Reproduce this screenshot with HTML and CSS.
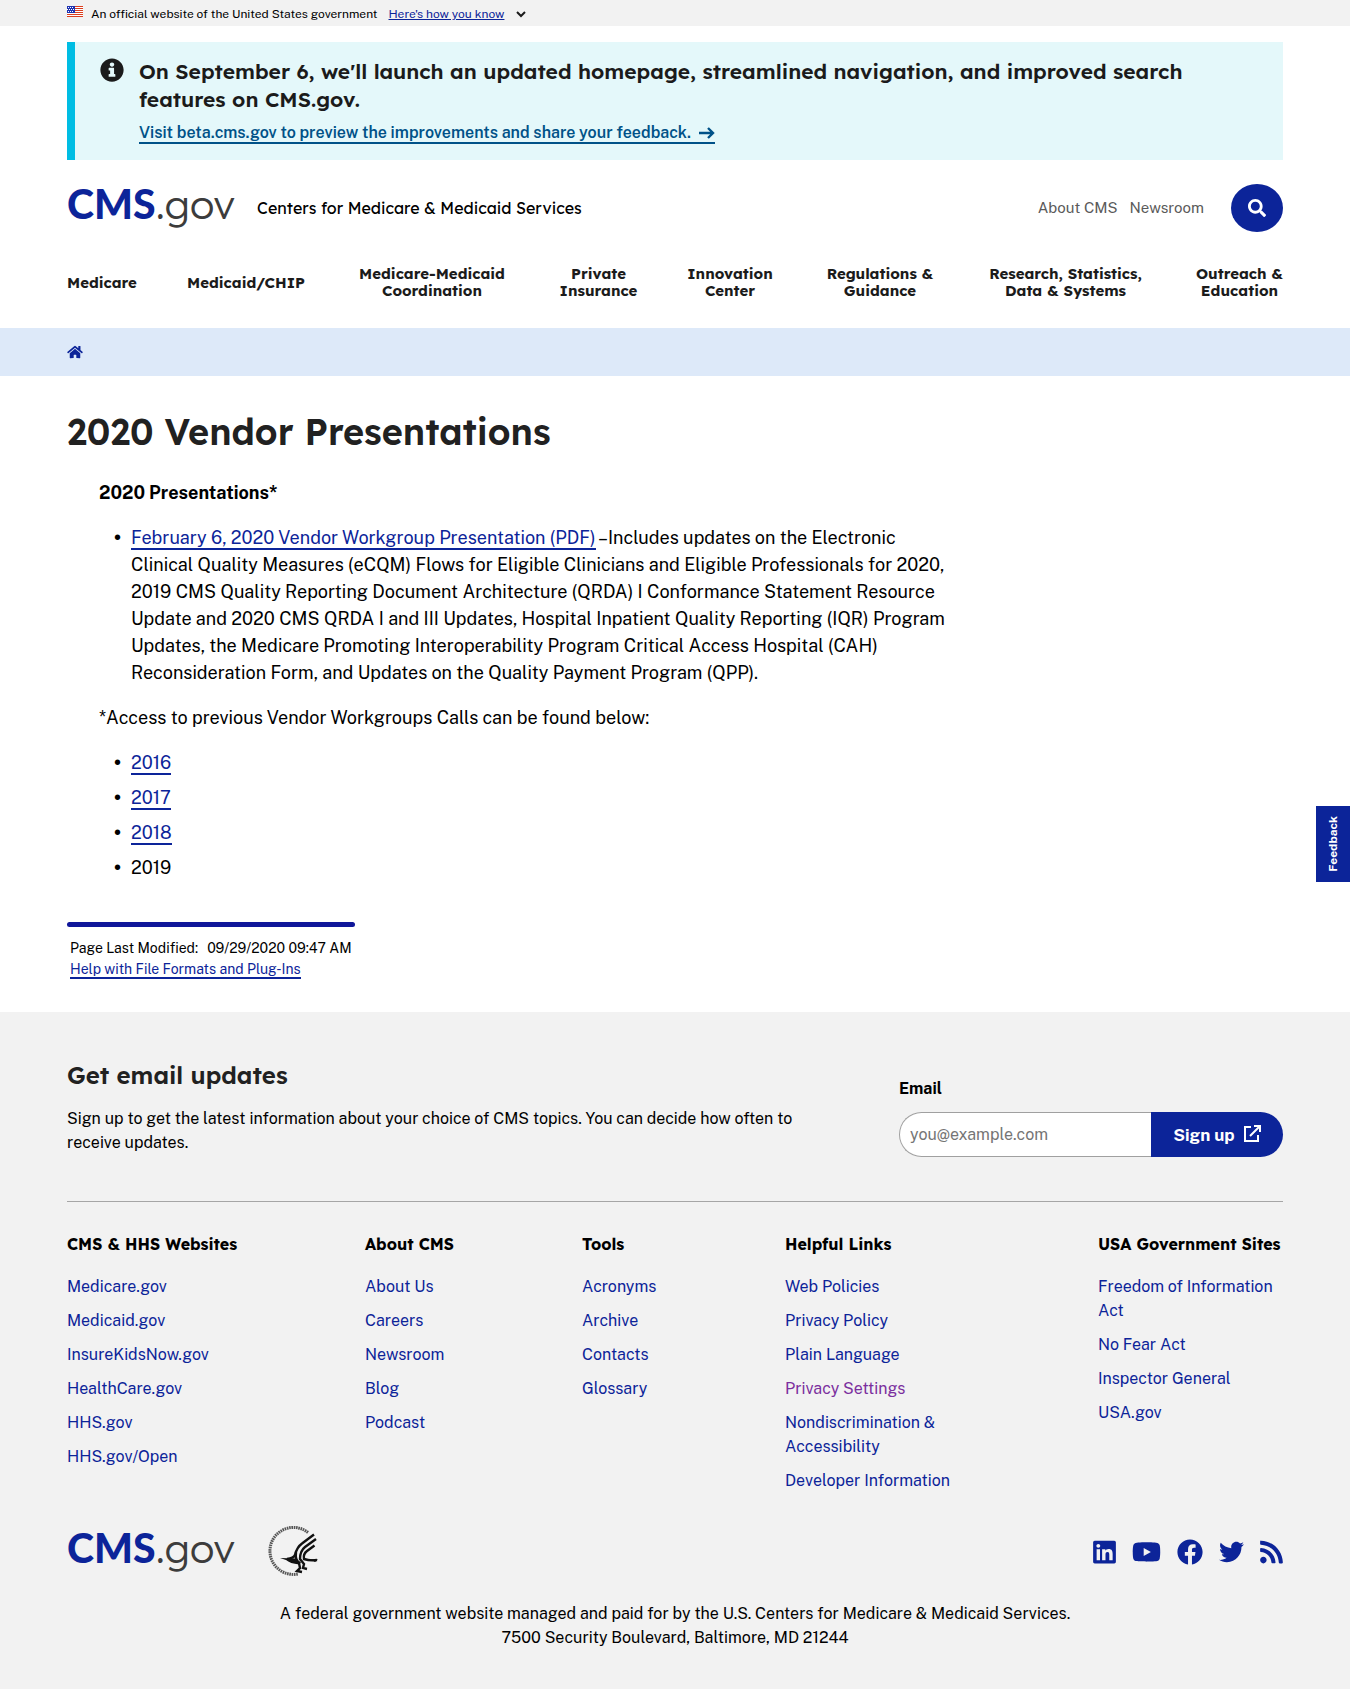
FILE: index.html
```html
<!DOCTYPE html>
<html lang="en">
<head>
<meta charset="utf-8">
<title>2020 Vendor Presentations | CMS</title>
<meta name="viewport" content="width=device-width, initial-scale=1">
<link rel="stylesheet" href="styles.css">
</head>
<body>
<div class="gov-banner wrap">
  <svg class="flag" viewBox="0 0 16 11" aria-hidden="true"><path fill="#fff" d="M0 0h16v11H0z"/><path stroke="#db3e1f" d="M0 .5h16M0 2.5h16M0 4.5h16M0 6.5h16M0 8.5h16M0 10.5h16"/><path fill="#1e33b1" d="M0 0h8v7H0z"/><path stroke="#fff" stroke-dasharray="1 1" d="M1 1.500h6M0 3.500h8M1 5.500h6"/></svg>
  <span>An official website of the United States government</span>
  <button class="gov-toggle" type="button"><span>Here's how you know</span>
    <svg viewBox="0 0 10 7" aria-hidden="true"><path d="M1 1l4 4 4-4" fill="none" stroke="#1b1b1b" stroke-width="2"/></svg>
  </button>
</div>

<div class="wrap">
  <section class="alert">
    <svg class="alert-icon" viewBox="0 0 512 512" aria-hidden="true"><path d="M256 8C119.043 8 8 119.083 8 256c0 136.997 111.043 248 248 248s248-111.003 248-248C504 119.083 392.957 8 256 8zm0 86c28 0 48 20 48 46s-20 46-48 46-48-20-48-46 20-46 48-46zm72 294c0 6.627-5.373 12-12 12H196c-6.627 0-12-5.373-12-12v-34c0-6.627 5.373-12 12-12h20v-74h-20c-6.627 0-12-5.373-12-12v-34c0-6.627 5.373-12 12-12h92c6.627 0 12 5.373 12 12v120h16c6.627 0 12 5.373 12 12v34z"/></svg>
    <div>
      <h2>On September 6, we'll launch an updated homepage, streamlined navigation, and improved search features on CMS.gov.</h2>
      <a href="#">Visit beta.cms.gov to preview the improvements and share your feedback.<svg viewBox="0 0 16 12" aria-hidden="true"><path d="M0 6h14M9 1l5 5-5 5" fill="none" stroke="currentColor" stroke-width="2.400"/></svg></a>
    </div>
  </section>
</div>

<header class="wrap">
  <div class="masthead">
    <a class="logo" href="#"><b>CMS</b>.gov</a>
    <span class="agency">Centers for Medicare &amp; Medicaid Services</span>
    <nav class="utility" aria-label="Utility"><a href="#">About CMS</a><a href="#">Newsroom</a></nav>
    <button class="search" type="button" aria-label="Search"><svg viewBox="0 0 512 512" aria-hidden="true"><path d="M505 442.700L405.300 343c-4.500-4.500-10.600-7-17-7H372c27.600-35.300 44-79.700 44-128C416 93.100 322.900 0 208 0S0 93.100 0 208s93.100 208 208 208c48.300 0 92.700-16.400 128-44v16.300c0 6.400 2.500 12.500 7 17l99.700 99.700c9.400 9.400 24.600 9.400 33.900 0l28.300-28.300c9.400-9.400 9.400-24.600.1-34zM208 336c-70.700 0-128-57.200-128-128 0-70.700 57.200-128 128-128 70.700 0 128 57.200 128 128 0 70.700-57.200 128-128 128z"/></svg></button>
  </div>
  <nav class="main-nav" aria-label="Main">
    <a href="#">Medicare</a>
    <a href="#">Medicaid/CHIP</a>
    <a href="#">Medicare-Medicaid<br>Coordination</a>
    <a href="#">Private<br>Insurance</a>
    <a href="#">Innovation<br>Center</a>
    <a href="#">Regulations &amp;<br>Guidance</a>
    <a href="#">Research, Statistics,<br>Data &amp; Systems</a>
    <a href="#">Outreach &amp;<br>Education</a>
  </nav>
</header>

<nav class="breadcrumb wrap" aria-label="Breadcrumb">
  <a href="#" aria-label="Home"><svg viewBox="0 0 576 512" aria-hidden="true"><path d="M280.370 148.260L96 300.110V464a16 16 0 0 0 16 16l112.060-.29a16 16 0 0 0 15.920-16V368a16 16 0 0 1 16-16h64a16 16 0 0 1 16 16v95.640a16 16 0 0 0 16 16.050L464 480a16 16 0 0 0 16-16V300L295.670 148.260a12.190 12.190 0 0 0-15.300 0zM571.600 251.470L488 182.560V44.050a12 12 0 0 0-12-12h-56a12 12 0 0 0-12 12v72.610L318.470 43a48 48 0 0 0-61 0L4.340 251.470a12 12 0 0 0-1.600 16.900l25.500 31A12 12 0 0 0 45.150 301l235.220-193.740a12.190 12.190 0 0 1 15.300 0L530.900 301a12 12 0 0 0 16.900-1.600l25.500-31a12 12 0 0 0-1.700-16.930z"/></svg></a>
</nav>

<main class="wrap">
  <h1>2020 Vendor Presentations</h1>
  <div class="article">
    <p><strong>2020 Presentations*</strong></p>
    <ul>
      <li><a href="#">February 6, 2020 Vendor Workgroup Presentation (PDF)</a> –Includes updates on the Electronic Clinical Quality Measures (eCQM) Flows for Eligible Clinicians and Eligible Professionals for 2020, 2019 CMS Quality Reporting Document Architecture (QRDA) I Conformance Statement Resource Update and 2020 CMS QRDA I and III Updates, Hospital Inpatient Quality Reporting (IQR) Program Updates, the Medicare Promoting Interoperability Program Critical Access Hospital (CAH) Reconsideration Form, and Updates on the Quality Payment Program (QPP).</li>
    </ul>
    <p>*Access to previous Vendor Workgroups Calls can be found below:</p>
    <ul>
      <li><a href="#">2016</a></li>
      <li><a href="#">2017</a></li>
      <li><a href="#">2018</a></li>
      <li>2019</li>
    </ul>
  </div>
  <div class="modified">
    <div><span>Page Last Modified:</span><time>09/29/2020 09:47 AM</time></div>
    <a href="#">Help with File Formats and Plug-Ins</a>
  </div>
</main>

<button class="feedback" type="button"><span>Feedback</span></button>

<footer class="wrap">
  <section class="updates">
    <div class="updates-copy">
      <h2>Get email updates</h2>
      <p>Sign up to get the latest information about your choice of CMS topics. You can decide how often to receive updates.</p>
    </div>
    <form class="signup">
      <label for="email">Email</label>
      <div class="signup-row">
        <input id="email" type="email" placeholder="you@example.com">
        <button type="button">Sign up<svg viewBox="0 0 17 17" aria-hidden="true"><path d="M7 2H1v14h13v-6M10 1h6v6M15.500 1.500L6 11" fill="none" stroke="#fff" stroke-width="2"/></svg></button>
      </div>
    </form>
  </section>
  <div class="link-columns">
    <section><h3>CMS &amp; HHS Websites</h3><ul>
      <li><a href="#">Medicare.gov</a></li><li><a href="#">Medicaid.gov</a></li><li><a href="#">InsureKidsNow.gov</a></li><li><a href="#">HealthCare.gov</a></li><li><a href="#">HHS.gov</a></li><li><a href="#">HHS.gov/Open</a></li></ul></section>
    <section><h3>About CMS</h3><ul>
      <li><a href="#">About Us</a></li><li><a href="#">Careers</a></li><li><a href="#">Newsroom</a></li><li><a href="#">Blog</a></li><li><a href="#">Podcast</a></li></ul></section>
    <section><h3>Tools</h3><ul>
      <li><a href="#">Acronyms</a></li><li><a href="#">Archive</a></li><li><a href="#">Contacts</a></li><li><a href="#">Glossary</a></li></ul></section>
    <section><h3>Helpful Links</h3><ul>
      <li><a href="#">Web Policies</a></li><li><a href="#">Privacy Policy</a></li><li><a href="#">Plain Language</a></li><li><a class="visited" href="#">Privacy Settings</a></li><li><a href="#">Nondiscrimination &amp;<br>Accessibility</a></li><li><a href="#">Developer Information</a></li></ul></section>
    <section><h3>USA Government Sites</h3><ul>
      <li><a href="#">Freedom of Information Act</a></li><li><a href="#">No Fear Act</a></li><li><a href="#">Inspector General</a></li><li><a href="#">USA.gov</a></li></ul></section>
  </div>
  <div class="brands">
    <a class="logo" href="#"><b>CMS</b>.gov</a>
    <svg class="hhs" viewBox="0 0 52 52" role="img" aria-label="Department of Health and Human Services">
      <path d="M41 6.500A23.500 23.500 0 1 0 31 48" fill="none" stroke="#555" stroke-width="3" stroke-dasharray="1.600 .7"/>
      <g fill="none" stroke="#111" stroke-width="2.400"><path d="M47 8.500L35 17.500Q30 21 28 29Q27 32 20 33"/><path d="M49 13L38 21Q33 25 33 33l4 5-1 4 4 1"/><path d="M47.500 19.500L40 25Q36 28 37 33q6 2 13 1"/><path d="M29 26q-1 8 3 11l1 5-3 3 5 1"/></g>
      <path d="M13 32l16 .5 5 4-2 2q-9-1-13-4.500zM43 33l8 .5-3 2.500z" fill="#111"/>
    </svg>
    <div class="social">
      <a href="#" aria-label="LinkedIn"><svg width="23" height="26" viewBox="0 0 448 512"><path d="M416 32H31.900C14.300 32 0 46.500 0 64.300v383.400C0 465.500 14.300 480 31.900 480H416c17.600 0 32-14.500 32-32.300V64.300c0-17.800-14.400-32.300-32-32.300zM135.400 416H69V202.200h66.500V416zm-33.200-243c-21.300 0-38.500-17.300-38.500-38.500S80.900 96 102.200 96c21.200 0 38.500 17.300 38.500 38.500 0 21.300-17.200 38.500-38.500 38.500zm282.100 243h-66.400V312c0-24.800-.5-56.700-34.500-56.700-34.600 0-39.900 27-39.900 54.900V416h-66.400V202.200h63.700v29.200h.9c8.900-16.800 30.600-34.500 62.900-34.500 67.200 0 79.700 44.300 79.700 101.900V416z"/></svg></a>
      <a href="#" aria-label="YouTube"><svg width="29" height="26" viewBox="0 0 576 512"><path d="M549.655 124.083c-6.281-23.650-24.787-42.276-48.284-48.597C458.781 64 288 64 288 64S117.220 64 74.629 75.486c-23.497 6.322-42.003 24.947-48.284 48.597-11.412 42.867-11.412 132.305-11.412 132.305s0 89.438 11.412 132.305c6.281 23.650 24.787 41.500 48.284 47.821C117.220 448 288 448 288 448s170.780 0 213.371-11.486c23.497-6.321 42.003-24.171 48.284-47.821 11.412-42.867 11.412-132.305 11.412-132.305s0-89.438-11.412-132.305zm-317.510 213.508V175.185l142.739 81.205-142.739 81.201z"/></svg></a>
      <a href="#" aria-label="Facebook"><svg width="26" height="26" viewBox="0 0 512 512"><path d="M504 256C504 119 393 8 256 8S8 119 8 256c0 123.780 90.690 226.380 209.250 245V327.690h-63V256h63v-54.640c0-62.150 37-96.480 93.670-96.480 27.140 0 55.520 4.840 55.520 4.840v61h-31.280c-30.800 0-40.410 19.120-40.410 38.730V256h68.780l-11 71.690h-57.780V501C413.310 482.380 504 379.780 504 256z"/></svg></a>
      <a href="#" aria-label="Twitter"><svg width="25" height="26" viewBox="0 0 512 512"><path d="M459.370 151.716c.325 4.548.325 9.097.325 13.645 0 138.720-105.583 298.558-298.558 298.558-59.452 0-114.680-17.219-161.137-47.106 8.447.974 16.568 1.299 25.340 1.299 49.055 0 94.213-16.568 130.274-44.832-46.132-.975-84.792-31.188-98.112-72.772 6.498.974 12.995 1.624 19.818 1.624 9.421 0 18.843-1.300 27.614-3.573-48.081-9.747-84.143-51.980-84.143-102.985v-1.299c13.969 7.797 30.214 12.670 47.431 13.319-28.264-18.843-46.781-51.005-46.781-87.391 0-19.492 5.197-37.360 14.294-52.954 51.655 63.675 129.300 105.258 216.365 109.807-1.624-7.797-2.599-15.918-2.599-24.040 0-57.828 46.782-104.934 104.934-104.934 30.213 0 57.502 12.670 76.670 33.137 23.715-4.548 46.456-13.320 66.599-25.340-7.798 24.366-24.366 44.833-46.132 57.827 21.117-2.273 41.584-8.122 60.426-16.243-14.292 20.791-32.161 39.308-52.628 54.253z"/></svg></a>
      <a href="#" aria-label="RSS"><svg width="23" height="26" viewBox="0 0 448 512"><path d="M128.081 415.959c0 35.369-28.672 64.041-64.041 64.041S0 451.328 0 415.959s28.672-64.041 64.041-64.041 64.040 28.673 64.040 64.041zm175.660 47.250c-8.354-154.600-132.185-278.587-286.950-286.950C7.656 175.765 0 183.105 0 192.253v48.069c0 8.415 6.490 15.472 14.887 16.018 111.832 7.284 201.473 96.702 208.772 208.772.547 8.397 7.604 14.887 16.018 14.887h48.069c9.149.001 16.489-7.655 15.995-16.790zm144.249.288C439.596 229.677 251.465 40.445 16.503 32.010 7.473 31.686 0 38.981 0 48.016v48.068c0 8.625 6.835 15.645 15.453 15.999 191.179 7.839 344.627 161.316 352.465 352.465.353 8.618 7.373 15.453 15.999 15.453h48.068c9.034-.001 16.329-7.474 16.005-16.504z"/></svg></a>
    </div>
  </div>
  <p class="address">A federal government website managed and paid for by the U.S. Centers for Medicare &amp; Medicaid Services.<br>7500 Security Boulevard, Baltimore, MD 21244</p>
</footer>
</body>
</html>
```
FILE: styles.css
```css
:root {
  --blue: #0c2499;
  --body: "Public Sans", Inter, sans-serif;
  --display: Lexend, Inter, sans-serif;
}
* { box-sizing: border-box; }
body { margin: 0; background: #fff; color: #000; font: 16px/24px var(--body); }
h1, h2, h3, p, ul { margin: 0; padding: 0; }
h1, h2, h3 { font-family: var(--display); }
h1, h2 { font-weight: 600; }
a { color: var(--blue); text-decoration: none; }
button { border: 0; padding: 0; background: none; font: inherit; cursor: pointer; }
svg { display: block; fill: currentColor; }
.wrap { padding-left: 67px; padding-right: 67px; }

.gov-banner { display: flex; align-items: center; height: 26px; padding-top: 2px; background: #f2f2f2; font-size: 12px; line-height: 24px; }
.flag { width: 16px; height: 11px; margin: 0 8px 6px 0; }
.gov-toggle { display: flex; align-items: center; gap: 12px; margin-left: 11px; color: var(--blue); }
.gov-toggle span { text-decoration: underline; }
.gov-toggle svg { width: 10px; height: 7px; }

.alert { display: flex; gap: 15px; margin-top: 16px; padding: 15px 24px 16px 25px; border-left: 8px solid #00bde3; background: #e4f8fa; color: #1b1b1b; }
.alert-icon { flex: none; width: 24px; height: 24px; margin-top: 1px; }
.alert h2 { font-size: 21px; line-height: 28px; }
.alert a { display: flex; align-items: center; gap: 8px; width: fit-content; margin-top: 11px; border-bottom: 2px solid #005288; color: #005288; font-weight: 600; line-height: 18px; }
.alert a svg { width: 16px; height: 12px; }

.masthead { display: flex; align-items: center; height: 48px; margin-top: 24px; }
.logo { margin-bottom: 8px; color: #3c3c3c; font: 300 40px/44px var(--display); }
.logo b { color: var(--blue); font: 900 41px/44px Lato, sans-serif; }
.agency { margin-left: 22px; font-family: var(--display); }
.utility { display: flex; gap: 12px; margin-left: auto; }
.utility a { color: #5a5a5a; font-size: 15px; }
.search { display: grid; place-items: center; width: 52px; height: 48px; margin-left: 27px; border-radius: 50%; background: var(--blue); color: #fff; }
.search svg { width: 18px; height: 18px; }
.main-nav { display: grid; grid-template-columns: 72fr 214fr 158fr 175fr 88fr 212fr 159fr 138fr; align-items: center; justify-items: center; padding: 33px 0 29px; }
.main-nav a { color: #1b1b1b; font: bold 15px/17px var(--display); text-align: center; }
.main-nav a:first-child { justify-self: start; }
.main-nav a:last-child { justify-self: end; }

.breadcrumb { display: flex; align-items: center; height: 48px; background: #dde9f9; }
.breadcrumb svg { width: 16px; height: 14px; }

h1 { padding-top: 32px; color: #212121; font-size: 36px; line-height: 47px; }
.article { max-width: 884px; padding: 24px 0 0 32px; font-size: 18px; line-height: 27px; }
.article p { margin-bottom: 18px; }
.article ul { margin-bottom: 18px; padding-left: 32px; list-style-type: "•\2002"; }
.article li::marker { font-family: "Liberation Sans", sans-serif; font-size: 20px; }
.article li + li { margin-top: 8px; }
.article a { border-bottom: 2px solid var(--blue); }
.modified { display: inline-block; min-width: 288px; margin-top: 23px; padding: 16px 3px 32px; font-size: 14px; line-height: 21px; position: relative; }
.modified::before { content: ""; position: absolute; inset: 0 0 auto; height: 5px; border-radius: 3px; background: #10179a; }
.modified div { display: flex; gap: 9px; }
.modified a { border-bottom: 2px solid var(--blue); }

.feedback { position: fixed; right: 0; top: 806px; display: grid; place-items: center; width: 34px; height: 76px; background: var(--blue); color: #fff; font-weight: bold; font-size: 12px; line-height: 16px; }
.feedback span { writing-mode: vertical-rl; transform: rotate(180deg); }

footer { background: #f2f2f2; padding-top: 48px; padding-bottom: 39px; }
.updates { display: flex; justify-content: space-between; padding-bottom: 44px; border-bottom: 1px solid #a6a6a6; }
.updates-copy { max-width: 752px; }
.updates h2 { margin-bottom: 16px; color: #212121; font-size: 24px; line-height: 31px; }
.signup { width: 384px; padding-top: 17px; }
.signup label { display: block; margin-bottom: 11px; font-weight: bold; }
.signup-row { display: flex; height: 45px; }
.signup input { flex: 1; min-width: 0; padding: 0 10px; border: 1px solid #a0a0a0; border-right: 0; border-radius: 23px 0 0 23px; background: #fff; font: inherit; }
.signup input::placeholder { color: #757575; opacity: 1; }
.signup button { display: flex; align-items: center; justify-content: center; gap: 9px; width: 132px; border-radius: 0 23px 23px 0; background: var(--blue); color: #fff; font-weight: bold; font-size: 17px; }
.signup button svg { width: 17px; height: 17px; margin-bottom: 2px; }

.link-columns { display: grid; grid-template-columns: 298fr 217fr 203fr 313fr 185fr; padding-top: 30px; }
.link-columns h3 { margin-bottom: 19px; font-size: 16px; line-height: 24px; white-space: nowrap; }
.link-columns ul { list-style: none; }
.link-columns li { margin-bottom: 10px; }
.link-columns .visited { color: #7b2f9e; }

.brands { display: flex; align-items: center; height: 52px; margin-top: 23px; }
.hhs { width: 52px; height: 52px; margin-left: 32px; }
.social { display: flex; align-items: center; gap: 16px; margin-left: auto; }
.address { padding-top: 24px; text-align: center; }
```
